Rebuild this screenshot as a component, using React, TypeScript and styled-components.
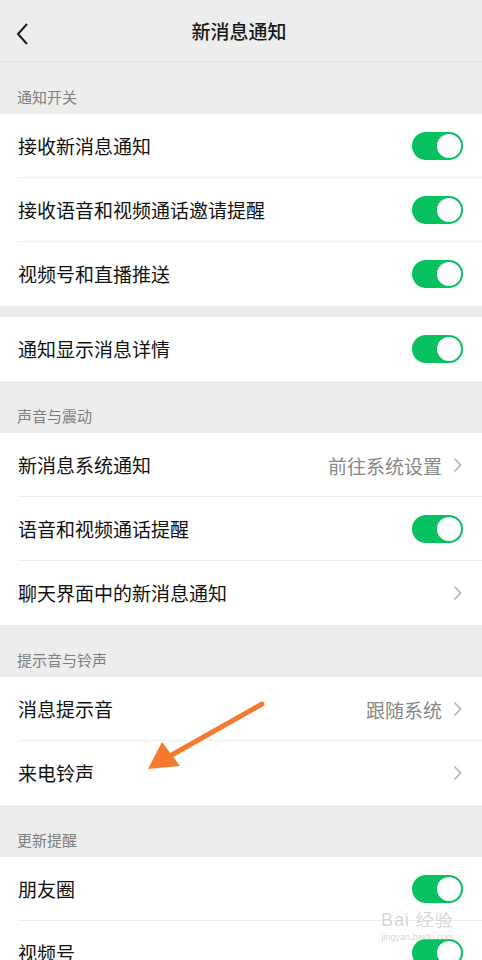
import React from "react";
import styled, { createGlobalStyle } from "styled-components";

const Global = createGlobalStyle`
  html, body { margin: 0; padding: 0; background: #ededed; }
  body { font-family: "Noto Sans CJK SC", "Noto Sans", sans-serif; }
`;

const Page = styled.div`
  position: relative;
  width: 482px;
  height: 960px;
  overflow: hidden;
  background: #ededed;
`;

const Header = styled.div`
  height: 61px;
  display: flex;
  align-items: center;
  justify-content: center;
  position: relative;
  border-bottom: 1px solid #e2e2e2;
`;

const BackBtn = styled.div`
  position: absolute;
  left: 14px;
  top: 22px;
  width: 20px;
  height: 24px;
  display: flex;
`;

const Title = styled.div`
  font-size: 19px;
  font-weight: 500;
  color: #191919;
  margin-left: -4px;
`;

const SectionLabel = styled.div`
  height: 52px;
  box-sizing: border-box;
  padding: 24px 0 0 17px;
  font-size: 15px;
  line-height: 22px;
  color: #7f7f7f;
`;

const Gap = styled.div`
  height: 11px;
`;

const Group = styled.div`
  background: #fff;
`;

const Row = styled.div<{ $last?: boolean }>`
  height: 64px;
  display: flex;
  align-items: center;
  padding: 0 19px 0 18px;
  position: relative;
  &::after {
    content: "";
    display: ${(p) => (p.$last ? "none" : "block")};
    position: absolute;
    left: 18px;
    right: 0;
    bottom: 0;
    height: 1px;
    background: #ededed;
  }
`;

const Label = styled.div`
  flex: 1;
  font-size: 19px;
  color: #111;
  line-height: 26px;
`;

const Value = styled.div`
  font-size: 19px;
  color: #888;
  margin-right: 11px;
`;

const Toggle = styled.div`
  width: 51px;
  height: 28px;
  border-radius: 14px;
  background: #07c160;
  position: relative;
  &::after {
    content: "";
    position: absolute;
    right: 2px;
    top: 2px;
    width: 24px;
    height: 24px;
    border-radius: 50%;
    background: #fff;
  }
`;

const ChevronBox = styled.div`
  width: 9px;
  height: 16px;
  display: flex;
  margin-right: 1px;
`;

const Arrow = styled.svg`
  position: absolute;
  left: 140px;
  top: 696px;
`;

const Watermark = styled.div`
  position: absolute;
  right: 28px;
  bottom: 18px;
  display: flex;
  flex-direction: column;
  align-items: flex-end;
  color: rgba(200, 200, 200, 0.75);
  font-family: "Liberation Sans", sans-serif;
  pointer-events: none;
`;

const WmTop = styled.div`
  font-size: 18px;
  letter-spacing: 1px;
`;
const WmBottom = styled.div`
  font-size: 9px;
`;

const Chevron = () => (
  <ChevronBox>
    <svg width="9" height="16" viewBox="0 0 9 16">
      <path d="M1.5 1.5 L7.5 8 L1.5 14.5" fill="none" stroke="#b3b3b3" strokeWidth="1.6" />
    </svg>
  </ChevronBox>
);

type Item = { label: string; kind: "toggle" | "link"; value?: string };

const sections: { title?: string; items: Item[] }[] = [
  {
    title: "通知开关",
    items: [
      { label: "接收新消息通知", kind: "toggle" },
      { label: "接收语音和视频通话邀请提醒", kind: "toggle" },
      { label: "视频号和直播推送", kind: "toggle" },
    ],
  },
  { items: [{ label: "通知显示消息详情", kind: "toggle" }] },
  {
    title: "声音与震动",
    items: [
      { label: "新消息系统通知", kind: "link", value: "前往系统设置" },
      { label: "语音和视频通话提醒", kind: "toggle" },
      { label: "聊天界面中的新消息通知", kind: "link" },
    ],
  },
  {
    title: "提示音与铃声",
    items: [
      { label: "消息提示音", kind: "link", value: "跟随系统" },
      { label: "来电铃声", kind: "link" },
    ],
  },
  {
    title: "更新提醒",
    items: [
      { label: "朋友圈", kind: "toggle" },
      { label: "视频号", kind: "toggle" },
    ],
  },
];

export default function App() {
  return (
    <Page>
      <Global />
      <Header>
        <BackBtn>
          <svg width="20" height="24" viewBox="0 0 20 24">
            <path d="M13 2 L4 12 L13 22" fill="none" stroke="#1a1a1a" strokeWidth="2" />
          </svg>
        </BackBtn>
        <Title>新消息通知</Title>
      </Header>
      {sections.map((s, si) => (
        <React.Fragment key={si}>
          {s.title ? <SectionLabel>{s.title}</SectionLabel> : <Gap />}
          <Group>
            {s.items.map((it, i) => (
              <Row key={it.label} $last={i === s.items.length - 1}>
                <Label>{it.label}</Label>
                {it.value && <Value>{it.value}</Value>}
                {it.kind === "toggle" ? <Toggle /> : <Chevron />}
              </Row>
            ))}
          </Group>
        </React.Fragment>
      ))}
      <Arrow width="130" height="80" viewBox="0 0 130 80">
        <path d="M122 8 L30 60" stroke="#f47a30" strokeWidth="5" strokeLinecap="round" />
        <polygon points="8,73 22,46 40,70" fill="#f47a30" />
      </Arrow>
      <Watermark>
        <WmTop>Bai 经验</WmTop>
        <WmBottom>jingyan.baidu.com</WmBottom>
      </Watermark>
    </Page>
  );
}
